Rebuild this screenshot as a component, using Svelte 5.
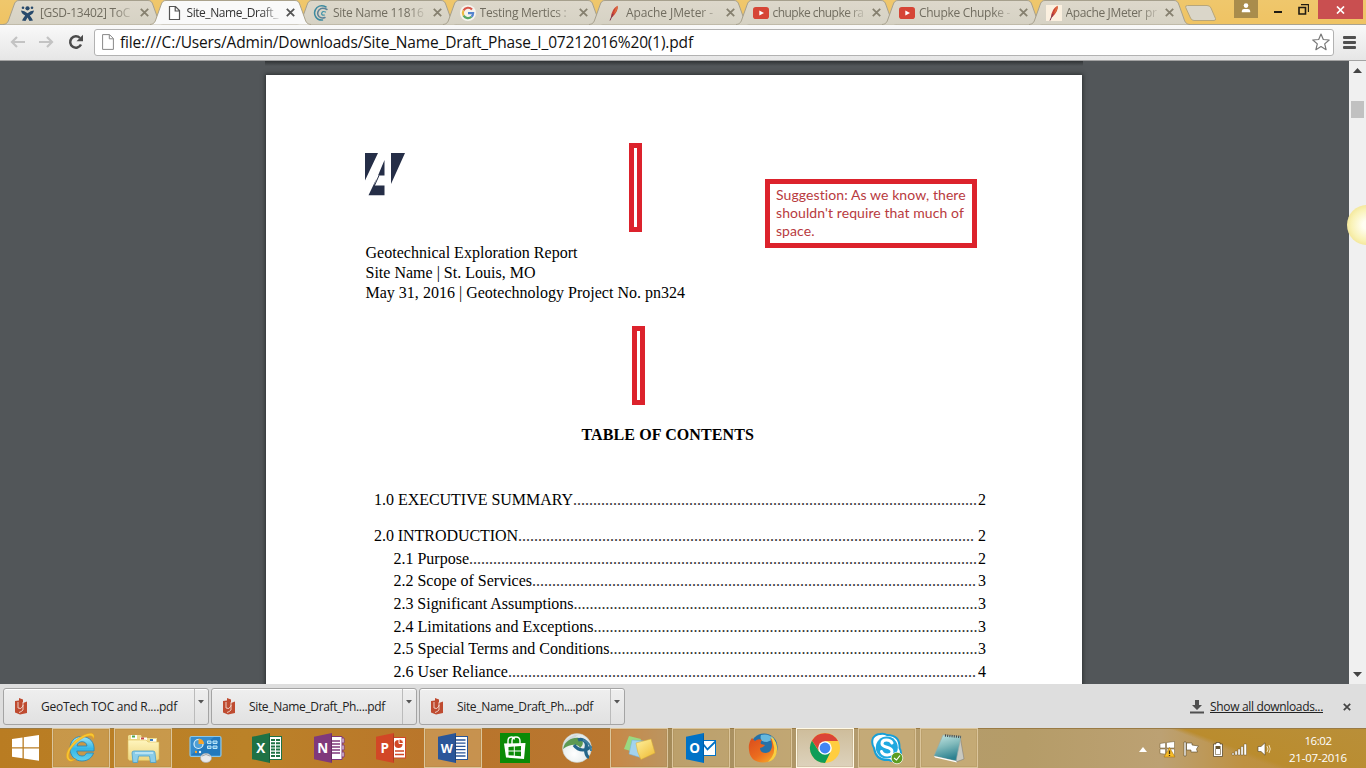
<script>
  // Spreads a label over its measured width by adjusting the tracking.
  function fit(node, width) {
    const w = node.getBoundingClientRect().width;
    const n = node.textContent.length;
    node.style.letterSpacing = (width - w) / n + 'px';
  }

  const tabs = [
    { icon: 'jira', text: '[GSD-13402] ToC', w: 90 },
    { icon: 'file', text: 'Site_Name_Draft_', w: 91.5, active: true },
    { icon: 'swirl', text: 'Site Name 11816', w: 90.5 },
    { icon: 'google', text: 'Testing Mertics :', w: 87 },
    { icon: 'feather', text: 'Apache JMeter -', w: 87 },
    { icon: 'youtube', text: 'chupke chupke ra', w: 91 },
    { icon: 'youtube', text: 'Chupke Chupke -', w: 91 },
    { icon: 'featherbox', text: 'Apache JMeter pr', w: 91 }
  ];

  const toc = [
    { t: '1.0 EXECUTIVE SUMMARY', w: 199, p: 2, major: true },
    { t: '2.0 INTRODUCTION', w: 144, p: 2, major: true },
    { t: '2.1 Purpose', w: 75.5, p: 2 },
    { t: '2.2 Scope of Services', w: 138.5, p: 3 },
    { t: '2.3 Significant Assumptions', w: 180, p: 3 },
    { t: '2.4 Limitations and Exceptions', w: 200, p: 3 },
    { t: '2.5 Special Terms and Conditions', w: 216, p: 3 },
    { t: '2.6 User Reliance', w: 114.5, p: 4 }
  ];
  const leader = (row) => '.'.repeat(Math.floor(((row.major ? 603.5 : 584) - row.w) / 4));

  const downloads = [
    { t: 'GeoTech TOC and R....pdf', w: 136 },
    { t: 'Site_Name_Draft_Ph....pdf', w: 136 },
    { t: 'Site_Name_Draft_Ph....pdf', w: 136 }
  ];

  const apps = [
    { id: 'ie', open: true },
    { id: 'explorer', open: true },
    { id: 'control' },
    { id: 'excel' },
    { id: 'onenote' },
    { id: 'powerpoint' },
    { id: 'word', open: true },
    { id: 'store' },
    { id: 'anyconnect' },
    { id: 'sticky', open: true },
    { id: 'outlook', open: true },
    { id: 'firefox', open: true },
    { id: 'chrome', open: true, front: true },
    { id: 'skype', open: true },
    { id: 'notepad', open: true }
  ];
</script>

{#snippet favicon(id)}
  <svg class="fav" viewBox="0 0 16 16">
    {#if id === 'jira'}
      <g fill="#27496b"><circle cx="7.5" cy="3.3" r="2.1" /><circle cx="3" cy="2.8" r="1.3" /><circle cx="12" cy="2.8" r="1.3" />
      <path d="M1 5.5 Q4.5 5.5 7.5 8.2 Q10.500 5.500 14 5.500 Q13.500 9 9.800 10.400 Q11.500 12.500 13 15.500 L9.500 16 L7.500 12.500 L5.500 16 L2 15.500 Q3.500 12.500 5.200 10.400 Q1.500 9 1 5.500Z" /></g>
    {:else if id === 'file'}
      <path d="M2.500 1.500 H8.500 L12.500 5.500 V14.500 H2.500Z M8.200 1.500 V6 H12.500" fill="#fff" stroke="#555" stroke-width="1.200" />
    {:else if id === 'swirl'}
      <g fill="none" stroke-linecap="round"><path d="M13 2 Q8 -.5 4 2.500 Q0 6.500 2.500 11.500 Q5 15.500 9.500 15" stroke="#3d8ba0" stroke-width="1.500" /><path d="M14 4.500 Q9 1.800 6 5 Q3.300 8.500 6 11.500 Q8.500 14 12 12.500" stroke="#5e8297" stroke-width="1.500" /><path d="M12.500 7 Q9.500 5.500 8.600 8.500 Q8.500 10.500 11.500 10" stroke="#4595aa" stroke-width="1.200" /></g>
    {:else if id === 'google'}
      <circle cx="8" cy="8" r="8" fill="#f6f4ee" />
      <g fill="none" stroke-width="2.200"><path d="M12 4.500 A5.200 5.200 0 0 0 3.500 5.500" stroke="#d95749" /><path d="M3.500 5.500 A5.200 5.200 0 0 0 3.600 10.700" stroke="#edbb42" /><path d="M3.600 10.700 A5.200 5.200 0 0 0 11.500 11.800" stroke="#58a866" /><path d="M11.500 11.800 A5.200 5.200 0 0 0 13.100 8.200 H8" stroke="#5484cf" /></g>
    {:else if id === 'feather' || id === 'featherbox'}
      {#if id === 'featherbox'}<rect width="16" height="16" fill="#fbf0df" />{/if}
      <path d="M5 12.500 Q5.500 4 11.500 .8 Q13 5 6.500 12Z" fill="#c94437" /><path d="M8.300 7 Q9 2.500 11.500 .8 Q12.300 4 8.300 9Z" fill="#e06a3c" /><path d="M4 15.500 L6.800 9" stroke="#7c3850" stroke-width="1" />
    {:else if id === 'youtube'}
      <rect x="0" y="2" width="16" height="12" rx="2.800" fill="#d64536" /><path d="M6.300 5.500 L11 8 L6.300 10.500Z" fill="#fff" />
    {/if}
  </svg>
{/snippet}

{#snippet office(color, dark, letter)}
  <path d="M0 3.800 L18 0 V30 L0 26.200Z" fill={color} /><path d="M17 3 L18 0 V30 L17 27Z" fill={dark} />
  <text x="8.700" y="19.700" text-anchor="middle" font-family="Open Sans" font-weight="700" font-size={letter === 'W' ? 12.5 : 13.5} fill="#fff">{letter}</text>
{/snippet}

{#snippet app(id)}
  <svg class="appicon" viewBox="0 0 30 30">
    {#if id === 'ie'}
      <path d="M15.500 3.500 C8 3.500 4 9 4 15.500 C4 23 9 28 16 28 C22 28 26 24.500 27.500 20 H20.500 C19.300 22.500 17.800 23 16 23 C12.800 23 11 21 10.800 18 H28 C29 9 23.500 3.500 15.500 3.500Z M11 13 C11.500 10 13.500 8.700 16 8.700 C18.700 8.700 20.700 10 21 13Z" fill="url(#ieb)" stroke="#2384b8" stroke-width=".8" fill-rule="evenodd" />
      <path d="M2 27 C-3 21 6 8 16 3 C25 -2 30 0 27.500 6 C27 2 23 1.500 17 5 C8 10 1 19 3 25 C4 27 7 27 10 25.500 C7 28.500 4 29 2 27Z" fill="#f8c832" stroke="#e79c16" stroke-width=".5" />
    {:else if id === 'explorer'}
      <path d="M0 3 L1 2 H13 L14 5 H29 V9 H0Z" fill="#eedd8f" /><rect x="3" y="2" width="6" height="4" fill="#fff" /><rect x="4" y="2.500" width="3" height="2" fill="#4da84f" /><rect x="12" y="4.500" width="7" height="3" fill="#fff" /><rect x="13" y="4.500" width="3" height="2" fill="#c94b45" /><rect x="22" y="6" width="6" height="3" fill="#fff" /><rect x="22" y="6" width="3" height="2" fill="#3e7fc0" />
      <path d="M0 7 H18 L20 9 H31 V26 L29 27.500 H1.500 L0 26Z" fill="url(#folder)" stroke="#ddbc58" stroke-width=".6" />
      <path d="M5 29.500 L4 20 Q4 18 6 18 H25 Q27 18 27 20 L28 29.500 H22.500 L21.500 23 H10.500 L9.500 29.500Z" fill="#8bcde9" stroke="#4a9fca" stroke-width=".8" /><path d="M7 20 H25" stroke="#d8f2fa" stroke-width="1.200" />
    {:else if id === 'control'}
      <rect x="0" y="3.500" width="31" height="20" rx="1.500" fill="#368ccc" stroke="#8ac6e7" stroke-width="1.200" /><path d="M1 22 L24 4 H30 V22Z" fill="#2379bd" />
      <circle cx="8.500" cy="11" r="4.500" fill="#4f9fd6" stroke="#d8effa" stroke-width="1.200" /><path d="M8.500 11 V5.500 A5.500 5.500 0 0 1 14 11Z" fill="#f6a32b" />
      <path d="M17.500 8 H21 V10.500 H17.500Z M17.500 13 H21 V15.500 H17.500Z M23 8 H27 V10.500 H23Z M23 13 H27 V15.500 H23Z" stroke="#bce5f8" stroke-width="1" fill="#56a7da" /><circle cx="6" cy="19" r="1.200" fill="#f6a32b" /><circle cx="10" cy="19" r="1.200" fill="#e6f5fc" />
      <ellipse cx="16" cy="25" rx="5.500" ry="4.500" fill="#e8e9eb" stroke="#a9aaad" stroke-width=".7" /><path d="M12 23 Q16 20 20 23" stroke="#9ea4aa" fill="none" />
    {:else if id === 'excel'}
      <rect x="17" y="3.500" width="12.500" height="23" fill="#fff" stroke="#1f7245" /><path d="M19 7 H28 M19 10.200 H28 M19 13.400 H28 M19 16.600 H28 M19 19.800 H28 M19 23 H28" stroke="#1f7245" stroke-width="2" stroke-dasharray="4 1" />
      {@render office('#1f7245', '#185c37', 'X')}
    {:else if id === 'onenote'}
      <path d="M17 3.500 H28 V26.500 H17Z M28 5 H30 V10 H28 M28 12 H30 V17 H28 M28 19 H30 V24 H28" fill="#fff" stroke="#80397b" /><path d="M18 8 H26 M18 11 H26 M18 14 H26 M18 17 H26 M18 20 H26" stroke="#80397b" stroke-width="1.300" />
      {@render office('#80397b', '#662c62', 'N')}
    {:else if id === 'powerpoint'}
      <rect x="17" y="4.500" width="12.500" height="20.500" fill="#fff" stroke="#d24726" /><circle cx="22.500" cy="11" r="4" fill="#d24726" /><path d="M23 10.500 V6 A4.500 4.500 0 0 1 27.500 10.500Z" fill="#d24726" stroke="#fff" /><path d="M19 18 H28 M19 21.500 H28" stroke="#d24726" stroke-width="1.500" />
      {@render office('#d24726', '#ae3b20', 'P')}
    {:else if id === 'word'}
      <rect x="17" y="3.500" width="12.500" height="23" fill="#fff" stroke="#2a5699" /><path d="M18 7 H27.500 M18 10.200 H27.500 M18 13.400 H27.500 M18 16.600 H27.500 M18 19.800 H27.500 M18 23 H27.500" stroke="#2a5699" stroke-width="1.300" />
      {@render office('#2a5699', '#204477', 'W')}
    {:else if id === 'store'}
      <rect width="30" height="30" fill="#0b8a07" /><path d="M4 10.500 L25.500 10 L24 26 L6 24.500Z" fill="#fff" /><path d="M8 12 V8 Q8 4 11.500 4 Q14 4 14.500 6.500 M12 12 V8 Q12 4 16 4 Q20 4 20 8 V12" fill="none" stroke="#fff" stroke-width="1.400" /><path d="M8.500 14 L13.800 13.600 V17.500 H8.500Z M14.800 13.500 L21 13 V17.500 H14.800Z M8.500 18.500 H13.800 V22.600 L8.500 22.200Z M14.800 18.500 H21 V23.200 L14.800 22.700Z" fill="#0b8a07" />
    {:else if id === 'anyconnect'}
      <circle cx="15" cy="15" r="14.500" fill="url(#ball)" stroke="#c2cac7" stroke-width=".5" /><path d="M1.500 11 Q7 1.500 17 1.500 Q11 5 11 9 Q6 9 1.500 15Z" fill="#cfd9db" /><path d="M1 16 C3 7 11 4 17 5 C22 7 22 12 18 15 C17 11 9 10 1 16Z" fill="#5c9951" /><path d="M12 12 C17 19 25 18 29 13" fill="none" stroke="#24668a" stroke-width="3.200" /><path d="M16 7 C20 5 26 8 24 15 C23 20 25 24 27 24" fill="none" stroke="#24668a" stroke-width="3.200" /><path d="M21 7 C27 9 29 14 29 18" fill="none" stroke="#3f7f9f" stroke-width="2" />
    {:else if id === 'sticky'}
      <path d="M5 3 L17 6 L13 20 L0 16Z" fill="#9ad980" /><path d="M8 7 L20 8 L18 25 L5 21Z" fill="#a3d3ed" stroke="#72b2db" stroke-width=".5" /><path d="M12 10 L27 6 L31 20 L17 26.500 Q13 20 12 10Z" fill="url(#note)" stroke="#d6ad35" stroke-width=".5" />
    {:else if id === 'outlook'}
      <rect x="17" y="7.500" width="12.500" height="15" fill="#fff" stroke="#0072c6" /><path d="M17 11 L21.500 16.500 L29.500 8.500" fill="none" stroke="#0072c6" stroke-width="1.800" />
      {@render office('#0072c6', '#005fa8', 'O')}
    {:else if id === 'firefox'}
      <circle cx="16" cy="14" r="13.500" fill="#2571a8" /><path d="M13 2 Q21 0 26 6 L19 9 Q11 9 13 2Z" fill="#66b8de" />
      <path d="M4 5 L7 8 Q10 5 14 7 Q12 9 13 11 L17 12 Q16 14 12 15 Q12 20 18 20 Q24 19 24 12 Q24 8 22 5 Q29 9 29 16 Q28 29 15 29.500 Q2 29 1 17 Q0 10 4 5Z" fill="url(#fox)" /><path d="M23 3 Q31 9 28.500 20 Q27 27 20 29 Q29 20 25 10Z" fill="#f8cf42" />
    {:else if id === 'chrome'}
      <circle cx="15" cy="15" r="15" fill="#ffcd40" /><path d="M2 7.500 L9 18.500 L20 20 L15 30 A15 15 0 0 1 2 7.500Z" fill="#0f9d58" /><path d="M2 7.500 A15 15 0 0 1 28 8 H15 L9 18Z" fill="#db4437" /><circle cx="15" cy="15" r="6.800" fill="#fff" /><circle cx="15" cy="15" r="5.400" fill="#4285f4" />
    {:else if id === 'skype'}
      <path d="M8 1 Q12 0 15 2 Q28 2 27.500 15 Q30 19 28 24 Q24 30 17 27 Q4 28 2 15 Q-1 10 1 5 Q4 1 8 1Z" fill="#fff" stroke="#189fd7" stroke-width="2" /><circle cx="14.800" cy="14.500" r="11" fill="#20a9e0" />
      <path d="M20 10 C18 6 10 6 10 10.500 C10 15.500 20 13 20 18.500 C20 23 11 23 9.500 18.500" fill="none" stroke="#fff" stroke-width="3" stroke-linecap="round" /><circle cx="25" cy="25" r="5.800" fill="#5c9d21" stroke="#fff" stroke-width=".7" /><path d="M22 25 L24.500 27 L28 22.500" fill="none" stroke="#fff" stroke-width="1.200" />
    {:else if id === 'notepad'}
      <path d="M26 3 L30 26 L22 29 L23 5Z" fill="#c9c9c0" stroke="#777" stroke-width=".5" /><path d="M9 2 L27 3.500 L22 28 L0 23Z" fill="url(#pad)" stroke="#96aaa8" stroke-width=".6" /><path d="M11 2.500 L27 4" stroke="#444" stroke-width="2.500" stroke-dasharray="1 1.200" /><path d="M0 23 L22 28 L23 29.500 L1 24.500Z" fill="#fff" />
    {/if}
  </svg>
{/snippet}

<svg width="0" height="0" class="defs">
  <defs>
    <linearGradient id="ieb" x2="0" y2="1"><stop stop-color="#9ce5f8" /><stop offset=".5" stop-color="#35b7e6" /><stop offset="1" stop-color="#63d1ee" /></linearGradient>
    <linearGradient id="folder" x2="0" y2="1"><stop stop-color="#fff5bd" /><stop offset="1" stop-color="#edd57f" /></linearGradient>
    <radialGradient id="ball" cx=".4" cy=".7"><stop stop-color="#fff" /><stop offset="1" stop-color="#e3eaea" /></radialGradient>
    <linearGradient id="note" x2=".7" y2="1"><stop stop-color="#fff1a0" /><stop offset="1" stop-color="#f0c03d" /></linearGradient>
    <linearGradient id="fox" x2=".8" y2="1"><stop stop-color="#d94c1d" /><stop offset=".6" stop-color="#ec6c1e" /><stop offset="1" stop-color="#f6a72a" /></linearGradient>
    <linearGradient id="pad" x2=".3" y2="1"><stop stop-color="#c7e8e6" /><stop offset=".5" stop-color="#81babb" /><stop offset="1" stop-color="#2c8190" /></linearGradient>
    <linearGradient id="tabfill" x2="0" y2="1"><stop stop-color="#ddd8cb" /><stop offset="1" stop-color="#d6d2c4" /></linearGradient>
  </defs>
</svg>

<div class="screen">
  <header class="strip">
    <div class="tabs">
      {#each tabs as tab}
        <div class="tab" class:active={tab.active}>
          <svg class="shape" viewBox="0 0 161 25"><path d="M0 24.500 C4 24.200 5 22 6 19 L11 5 C12 2 13 .5 16 .5 H145 C148 .5 149 2 150 5 L155 19 C156 22 157 24.200 161 24.500" /></svg>
          {@render favicon(tab.icon)}
          <span class="label"><span use:fit={tab.w}>{tab.text}</span></span>
          <svg class="x" viewBox="0 0 9 9"><path d="M.8 .8 L8.200 8.200 M8.200 .8 L.8 8.200" /></svg>
        </div>
      {/each}
    </div>
    <svg class="newtab" viewBox="0 0 34 17"><path d="M3.500 .5 H23 Q26 .5 27 3 L31.500 13.500 Q32 15.500 30 15.500 H10 Q7.500 15.500 6.500 13 L1.700 2.500 Q1 .5 3.500 .5Z" fill="#dad6c9" stroke="#b7a67b" /></svg>
    <div class="user"><svg width="10" height="10" viewBox="0 0 10 10"><circle cx="5" cy="2.600" r="2.300" fill="#fff" /><path d="M.8 9.200 V8 Q1 6 3 6 H7 Q9 6 9.200 8 V9.200Z" fill="#fff" /></svg></div>
    <svg class="min" viewBox="0 0 8 2"><rect width="8" height="2" fill="#1e1a12" /></svg>
    <svg class="max" viewBox="0 0 11 11"><path d="M1 3.500 H7.500 V10 H1Z" fill="none" stroke="#1e1a12" stroke-width="1.600" /><path d="M3 .6 H10.400 V8" fill="none" stroke="#1e1a12" stroke-width="1.100" /></svg>
    <div class="close"><svg width="9" height="8" viewBox="0 0 9 8"><path d="M1 .5 L8 7.500 M8 .5 L1 7.500" stroke="#fff" stroke-width="1.700" /></svg></div>
  </header>

  <nav class="toolbar">
    <svg class="arrow" viewBox="0 0 15 12"><path d="M15 6 H2 M7 1 L2 6 L7 11" /></svg>
    <svg class="arrow fwd" viewBox="0 0 15 12"><path d="M0 6 H13 M8 1 L13 6 L8 11" /></svg>
    <svg class="reload" viewBox="0 0 16 16"><path d="M13 10.500 A5.700 5.700 0 1 1 12 4" fill="none" stroke="#4c4c4c" stroke-width="2.500" /><path d="M15 .8 V7.300 H8.500Z" fill="#4c4c4c" /></svg>
    <div class="omnibox">
      <svg class="doc" viewBox="0 0 12 16"><path d="M.6 .6 H7.500 L11.400 4.500 V15.400 H.6Z M7.300 .6 V4.800 H11.400" fill="#fff" stroke="#888" /></svg>
      <span class="url"><span use:fit={573}>file:///C:/Users/Admin/Downloads/Site_Name_Draft_Phase_I_07212016%20(1).pdf</span></span>
      <svg class="star" viewBox="0 0 18 18"><path d="M9 1 L11.300 6.500 L17.200 7 L12.700 10.900 L14.100 16.700 L9 13.600 L3.900 16.700 L5.300 10.900 L.8 7 L6.700 6.500Z" fill="#fff" stroke="#777" stroke-width="1.200" stroke-linejoin="round" /></svg>
    </div>
    <div class="menu"><i></i><i></i><i></i></div>
  </nav>

  <main class="viewer">
    <div class="canvas">
      <div class="prev"></div>
      <article class="page">
        <svg class="logo" viewBox="0 0 41 44"><path d="M0 1 H13 L0 28.500Z M26 1 H40 L26 32Z M19.500 8 V23.500 H13Z M11.500 26.500 L9.500 32 L10 33.500 H19.500 V43.300 H3.500Z" fill="#252e47" /><path d="M9.500 33.500 L14 23.500" stroke="#252e47" stroke-width="1" /></svg>
        <div class="intro">
          <p><span use:fit={212}>Geotechnical Exploration Report</span></p>
          <p><span use:fit={170}>Site Name | St. Louis, MO</span></p>
          <p><span use:fit={319.500}>May 31, 2016 | Geotechnology Project No. pn324</span></p>
        </div>
        <h1><span use:fit={172.500}>TABLE OF CONTENTS</span></h1>
        <div class="toc">
          {#each toc as row}
            <div class="row" class:major={row.major}>
              <span use:fit={row.w}>{row.t}</span><span class="leader">{leader(row)}</span><span class="num">{row.p}</span>
            </div>
          {/each}
        </div>
      </article>
      <div class="mark first"></div>
      <div class="mark second"></div>
      <div class="comment">
        <div><span use:fit={190}>Suggestion: As we know, there</span></div>
        <div><span use:fit={188}>shouldn't require that much of</span></div>
        <div><span use:fit={38.500}>space.</span></div>
      </div>
    </div>
    <aside class="scroll">
      <svg width="9" height="5" viewBox="0 0 9 5"><path d="M0 5 L4.500 0 L9 5Z" fill="#444" /></svg>
      <div class="thumb"></div>
      <svg class="down" width="9" height="5" viewBox="0 0 9 5"><path d="M0 0 L4.500 5 L9 0Z" fill="#444" /></svg>
    </aside>
    <div class="bubble"></div>
  </main>

  <section class="shelf">
    {#each downloads as d}
      <div class="item">
        <svg class="pdf" viewBox="0 0 12 17"><path d="M0 3 L4 2.500 V0 L8 1.500 V5 L12 3.500 V15 L5 16.500 L0 14.500Z" fill="#bf4b30" /><path d="M3 4 V10 Q6 12 8 8 V4 M8 7 V12 Q6 14 4 14.500" stroke="#f1ddd4" stroke-width=".9" fill="none" /></svg>
        <span class="fname"><span use:fit={d.w}>{d.t}</span></span>
        <div class="drop"><svg width="6" height="4" viewBox="0 0 6 4"><path d="M0 0 H6 L3 3.500Z" fill="#555" /></svg></div>
      </div>
    {/each}
    <div class="all">
      <svg width="14" height="14" viewBox="0 0 14 14"><path d="M5 0 H9 V5 H12 L7 10 L2 5 H5Z M0 11.500 H14 V13.500 H0Z" fill="#505050" /></svg>
      <span class="link"><span use:fit={113}>Show all downloads...</span></span>
      <svg class="shut" width="8" height="8" viewBox="0 0 8 8"><path d="M.8 .8 L7.200 7.200 M7.200 .8 L.8 7.200" stroke="#444" stroke-width="1.700" /></svg>
    </div>
  </section>

  <footer class="taskbar">
    <svg class="start" viewBox="0 0 27 26"><path d="M0 4 L10.500 2.500 V12.300 H0Z M11.800 2.200 L27 0 V12.300 H11.800Z M0 13.500 H10.500 V23.300 L0 21.800Z M11.800 13.500 H27 V25.800 L11.800 23.600Z" fill="#fff" /></svg>
    <div class="apps">
      {#each apps as a}
        <div class="app {a.id}" class:open={a.open} class:front={a.front}>{@render app(a.id)}</div>
      {/each}
    </div>
    <div class="tray">
      <svg width="8" height="5" viewBox="0 0 8 5"><path d="M0 5 L4 0 L8 5Z" fill="#fff" /></svg>
      <svg class="win" width="17" height="17" viewBox="0 0 17 17"><path d="M1 2.500 L6.500 1.700 V7 H1Z M7.500 1.500 L15.500 .5 V7 H7.500Z M1 8 H6.500 V13.200 L1 12.500Z M7.500 8 H15.500 V14.500 L7.500 13.500Z" fill="#fff" stroke="#6b572e" stroke-width=".5" /><path d="M10.500 6.500 L16 16 H5Z" fill="#f8bd28" stroke="#a87412" stroke-width=".6" /><path d="M10.500 9.500 V13 M10.500 14 V15" stroke="#3d3015" stroke-width="1.300" /></svg>
      <svg class="flag" width="17" height="16" viewBox="0 0 17 16"><path d="M1 1 H3 V15 H1Z M3.500 2 H9 V4 L15.500 5 L13.500 8 L14.500 11 H8 V9 H3.500Z" fill="#fff" stroke="#574625" stroke-width=".6" /></svg>
      <svg class="bat" width="10" height="15" viewBox="0 0 10 15"><path d="M3 .5 H7 V2 H9.500 V14.500 H.5 V2 H3Z" fill="#fff" stroke="#4b3b20" stroke-width=".7" /><path d="M2.500 4 H7.500 V7 H2.500Z" fill="#665431" /><path d="M2.500 7 V12.500 H7.500 V7" fill="none" stroke="#665431" stroke-width=".6" /></svg>
      <svg class="sig" width="17" height="13" viewBox="0 0 17 13"><path d="M1 10 H3 V12 H1Z M4 8 H6.200 V12 H4Z M7 6 H9.200 V12 H7Z M10 3.500 H12.200 V12 H10Z M13 1 H15.500 V12 H13Z" fill="#fff" stroke="#554321" stroke-width=".4" /></svg>
      <svg class="vol" width="14" height="14" viewBox="0 0 14 14"><path d="M1 4.500 H4 L8 .8 V13.200 L4 9.500 H1Z" fill="#fff" stroke="#554321" stroke-width=".6" /><path d="M10 4 Q12 7 10 10 M12 3 Q14.500 7 12 11" fill="none" stroke="#f6e9c8" stroke-width=".9" /></svg>
    </div>
    <div class="clock"><div><span use:fit={27}>16:02</span></div><div><span use:fit={58}>21-07-2016</span></div></div>
  </footer>
</div>

<style>
  :global(body) { margin: 0; overflow: hidden; }
  .defs { position: absolute; }
  .screen { width: 1366px; height: 768px; display: flex; flex-direction: column; overflow: hidden; font-family: "Open Sans", "Noto Sans", sans-serif; font-size: 12px; }
  svg { display: block; flex: none; }
  span { white-space: pre; }

  .strip { height: 25px; flex: none; display: flex; align-items: flex-start; background: linear-gradient(#efc76c, #efc363); box-shadow: inset 0 -1px #aaa38f; }
  .tabs { display: flex; padding-left: 3px; position: relative; }
  .tab { width: 161px; height: 25px; margin-right: -14.500px; box-sizing: border-box; display: flex; align-items: center; padding: 0 0 0 17px; position: relative; }
  .tab.active { z-index: 2; }
  .shape { position: absolute; inset: 0; width: 161px; height: 25px; fill: url(#tabfill); stroke: #a6a08d; stroke-width: 1; }
  .active .shape { fill: #f9f9f9; stroke: #aaa28c; }
  .fav { width: 16px; height: 16px; position: relative; }
  .label { width: 92px; margin-left: 4px; position: relative; color: #716d60; font-size: 12px; line-height: 20px; mask-image: linear-gradient(to right, #000 74px, rgba(0, 0, 0, .15) 92px); }
  .active .label { color: #333; }
  .x { width: 9px; height: 9px; margin-left: 7.500px; position: relative; stroke: #86806f; stroke-width: 1.800; }
  .active .x { stroke: #555; }
  .newtab { width: 34px; height: 17px; margin: 5px 0 0 9px; }
  .user { width: 24px; height: 18px; margin-left: 15.500px; background: #a98c4c; display: flex; align-items: center; justify-content: center; box-sizing: border-box; padding-bottom: 2px; }
  .min { width: 8px; height: 2px; margin: 11px 0 0 16px; }
  .max { width: 11px; height: 11px; margin: 4px 0 0 16px; }
  .close { width: 45px; height: 19px; margin-left: auto; margin-right: 3px; background: #c94f50; display: flex; align-items: center; justify-content: center; }

  .toolbar { height: 36px; flex: none; box-sizing: border-box; display: flex; align-items: center; background: linear-gradient(#f9f9f9, #e6e6e6); border-bottom: 1px solid #a3a3a3; padding: 0 10px 1px 10px; }
  .arrow { width: 15px; height: 12px; fill: none; stroke: #c3c3c3; stroke-width: 2.200; }
  .fwd { margin-left: 14px; }
  .reload { width: 16px; height: 16px; margin-left: 14px; }
  .omnibox { width: 1240px; height: 27px; box-sizing: border-box; margin-left: 10px; border: 1px solid #b2b2b2; border-radius: 3px; background: #fff; display: flex; align-items: center; padding: 0 3px 0 7px; }
  .doc { width: 12px; height: 16px; }
  .url { flex: 1; margin-left: 6px; font-size: 15.500px; line-height: 22px; color: #111; }
  .star { width: 18px; height: 18px; }
  .menu { display: flex; flex-direction: column; gap: 2px; margin-left: 9px; flex: none; }
  .menu i { width: 13px; height: 3px; background: #505050; border-radius: 1px; }

  .viewer { flex: 1; min-height: 0; display: flex; position: relative; }
  .canvas { flex: 1; background: #525659; position: relative; overflow: hidden; display: flex; flex-direction: column; align-items: center; box-sizing: border-box; padding-right: 1px; }
  .prev { width: 818px; height: 5px; flex: none; background: linear-gradient(#303335, #525659); }
  .page { width: 816px; height: 700px; box-sizing: border-box; margin-top: 9px; padding: 77px 95px 0 99px; background: #fff; color: #000; font-family: "Liberation Serif", serif; font-size: 16px; box-shadow: 0 0 4px 1px #2e3133; flex: none; }
  .logo { width: 41px; height: 44px; }
  .intro { margin-top: 47px; line-height: 20px; margin-left: .5px; }
  p { margin: 0; }
  h1 { font-size: 16px; line-height: 20px; font-weight: 700; margin: 122px 0 0 216.500px; }
  .toc { margin-top: 45px; margin-right: 1px; }
  .row { display: flex; height: 22.650px; line-height: 20px; padding-left: 28.500px; }
  .row.major { padding-left: 9px; }
  .row.major:first-child { height: 36px; }
  .leader { flex: 1; min-width: 0; color: #333; }
  .num { width: 8px; }

  .mark { position: absolute; box-sizing: border-box; width: 13px; border: 5px solid #dc222c; background: #fff; }
  .first { left: 629px; top: 82px; height: 89px; }
  .second { left: 632px; top: 265px; height: 79px; }
  .comment { position: absolute; left: 765px; top: 118px; width: 212px; height: 69px; box-sizing: border-box; border: 5px solid #dc222c; background: #fff; padding: 2px 6px; color: #b83a40; font-family: Lato, sans-serif; font-size: 14px; line-height: 18px; }

  .scroll { width: 17px; background: #f0f0f0; display: flex; flex-direction: column; align-items: center; padding: 7px 0 7px; box-sizing: border-box; }
  .thumb { width: 13px; height: 17px; margin-top: 28px; background: #c1c1c1; }
  .down { margin-top: auto; }
  .bubble { position: absolute; left: 1347px; top: 144px; width: 40px; height: 40px; border-radius: 50%; background: radial-gradient(circle, #fffef2 15%, #f9f2b6 55%, #edd978 95%); }

  .shelf { height: 44px; flex: none; display: flex; align-items: flex-start; gap: 2px; padding: 4px 0 0 3px; box-sizing: border-box; background: #dedede; }
  .item { width: 206px; height: 37px; box-sizing: border-box; display: flex; align-items: center; border: 1px solid #a4a4a4; border-radius: 3px; background: linear-gradient(#efefef, #e1e1e1); box-shadow: inset 0 1px #fff; padding-left: 11px; }
  .pdf { width: 12px; height: 17px; }
  .fname { flex: 1; margin-left: 14px; color: #222; }
  .drop { width: 14px; height: 100%; border-left: 1px solid #bbb; box-sizing: border-box; display: flex; justify-content: center; padding: 11px 1px 0 0; }
  .all { margin-left: auto; display: flex; align-items: center; height: 37px; padding-right: 15px; }
  .link { margin-left: 6px; color: #222; }
  .link span { text-decoration: underline; }
  .shut { margin-left: 20px; }

  .taskbar { height: 40px; flex: none; display: flex; align-items: center; background: linear-gradient(20deg, transparent 86.500%, #ba8c2e 87.500%, #b98f39 100%), linear-gradient(90deg, #b97c22 0, #bb8228 18%, #b9742b 33%, #b87730 45%, #a58b59 49%, #b39b6e 62%, #b59c68 75%, #bca173 85%, #be9142 91%, #b78c35 100%); box-shadow: inset 0 1px #9a7b45; }
  .start { width: 27px; height: 26px; margin-left: 12px; }
  .apps { display: flex; gap: 4px; margin-left: 13px; }
  .app { width: 58px; height: 40px; box-sizing: border-box; display: flex; align-items: center; justify-content: center; border: 1px solid transparent; }
  .open { background: rgba(224, 195, 136, .38); border-color: #dbc59b; box-shadow: inset 0 0 0 1px rgba(133, 98, 45, .12); }
  .sticky.open { background: rgba(220, 165, 110, .4); }
  .front { background: linear-gradient(#cebd9b, #ddd2bc); border-color: #fff9e5; }
  .appicon { width: 30px; height: 30px; overflow: visible; }
  .tray { display: flex; align-items: center; margin-left: auto; padding-top: 2px; }
  .win { margin-left: 12px; }
  .flag { margin-left: 7px; }
  .bat { margin-left: 13px; }
  .sig { margin-left: 8px; }
  .vol { margin-left: 9px; }
  .clock { width: 58px; margin: 0 19px 0 18px; color: #fff; font-size: 11.500px; line-height: 17px; text-align: center; padding-top: 2px; }
</style>
